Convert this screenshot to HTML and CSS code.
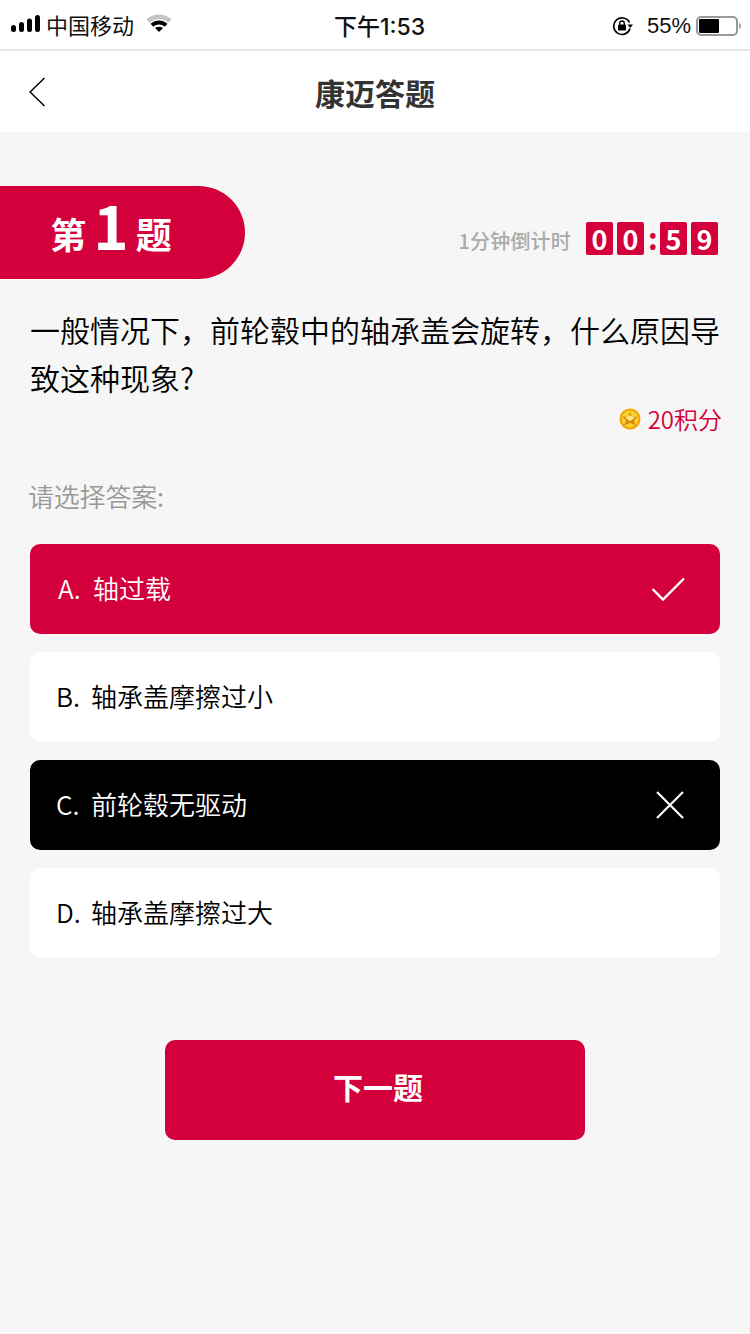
FILE: index.html
```html
<!DOCTYPE html>
<html lang="zh-CN">
<head>
<meta charset="utf-8">
<title>康迈答题</title>
<link rel="stylesheet" href="styles.css">
</head>
<body>
<div class="statusbar">
  <div class="st-left">
    <svg class="signal" width="30" height="18" viewBox="0 0 30 18"><rect x="0" y="10" width="5" height="7" rx="2.5"/><rect x="8" y="7" width="5" height="10" rx="2.5"/><rect x="16" y="3.500" width="5" height="13.500" rx="2.500"/><rect x="24" y="0" width="5" height="17" rx="2.500"/></svg>
    <span class="carrier">中国移动</span>
    <svg class="wifi" width="26" height="19" viewBox="0 0 26 19"><path d="M0.500 5.500C7.500-1.300 18.500-1.300 25.500 5.500L22.300 8.800C16.500 3.800 9.500 3.800 3.700 8.800Z" fill="#c4c4c4"/><path d="M4.500 9.800C9.500 5.300 16.500 5.300 21.500 9.800L18.600 12.700C15.200 9.800 10.800 9.800 7.400 12.700Z"/><path d="M9 14C11.300 12.300 14.700 12.300 17 14L13 18Z"/></svg>
  </div>
  <div class="st-time">下午1:53</div>
  <div class="st-right">
    <svg class="lock" width="22" height="20" viewBox="0 0 22 20"><path d="M17.500 6.500A8.300 8.300 0 1 0 18 12.500" fill="none" stroke="#000" stroke-width="1.700"/><path d="M15.500 8.500H21L18.300 12Z"/><rect x="6" y="8.500" width="8" height="6" rx="1"/><path d="M7.700 9V7.300a2.300 2.300 0 0 1 4.600 0V9" fill="none" stroke="#000" stroke-width="1.400"/></svg>
    <span class="pct">55%</span>
    <span class="battery"><span class="battery-fill"></span></span>
    <span class="battery-tip"></span>
  </div>
</div>
<header class="nav">
  <svg class="back" width="16" height="30" viewBox="0 0 16 30"><path d="M15.500 1L1 15L15.500 29" fill="none" stroke="#000" stroke-width="1.500"/></svg>
  <h1 class="nav-title">康迈答题</h1>
</header>
<main class="content">
  <div class="qhead">
    <div class="qbadge"><span class="qb-word">第</span><span class="qb-num">1</span><span class="qb-word">题</span></div>
    <div class="timer">
      <span class="timer-label">1分钟倒计时</span>
      <span class="digits">
        <span class="digit">0</span><span class="digit">0</span><span class="colon">:</span><span class="digit">5</span><span class="digit">9</span>
      </span>
    </div>
  </div>
  <p class="question">一般情况下，前轮毂中的轴承盖会旋转，什么原因导致这种现象?</p>
  <div class="points">
    <svg class="coin" width="22" height="22" viewBox="0 0 22 22"><circle cx="11" cy="11" r="10.500" fill="#efa400"/><circle cx="11" cy="11" r="8.500" fill="#fbd234"/><path d="M3 8.500L8.500 9L11 4L13.500 9L19 8.500L15 12.500L17 17.500L11 15L5 17.500L7 12.500Z" fill="#d98a12"/><path d="M6.500 10L11 7L15.500 10L11 13Z" fill="#fde98a"/></svg>
    <span>20积分</span>
  </div>
  <div class="prompt">请选择答案:</div>
  <div class="options">
    <div class="option is-correct"><span class="opt-key">A.</span><span class="opt-text">轴过载</span>
      <svg class="opt-icon" width="36" height="28" viewBox="0 0 36 28"><path d="M2.500 14L13 24.500L34 3.500" fill="none" stroke="#fff" stroke-width="2.400"/></svg></div>
    <div class="option"><span class="opt-key">B.</span><span class="opt-text">轴承盖摩擦过小</span></div>
    <div class="option is-wrong"><span class="opt-key">C.</span><span class="opt-text">前轮毂无驱动</span>
      <svg class="opt-icon" width="36" height="28" viewBox="0 0 36 28"><path d="M7 1L33 27M33 1L7 27" fill="none" stroke="#fff" stroke-width="2.200"/></svg></div>
    <div class="option"><span class="opt-key">D.</span><span class="opt-text">轴承盖摩擦过大</span></div>
  </div>
  <button class="next" type="button">下一题</button>
</main>
</body>
</html>
```
FILE: styles.css
```css
* { box-sizing: border-box; }
html, body { margin: 0; padding: 0; }
body {
  width: 750px;
  height: 1334px;
  overflow: hidden;
  background: #f6f6f6;
  color: #000;
  font-family: "Noto Sans CJK SC", "Noto Sans", sans-serif;
}
.statusbar {
  height: 51px;
  background: #fff;
  border-bottom: 2px solid #e6e6e6;
  display: flex;
  align-items: center;
  justify-content: space-between;
  padding: 0 9px 0 11px;
  position: relative;
  font-family: "Liberation Sans", "Noto Sans CJK SC", sans-serif;
  font-size: 22px;
  color: #111;
}
.st-left, .st-right { display: flex; align-items: center; }
.signal { margin-right: 5px; margin-top: -1px; }
.wifi { margin-left: 12px; margin-top: -2px; }
.carrier { line-height: 26px; margin-top: -2px; font-family: "Noto Sans CJK SC", sans-serif; font-weight: 400; }
.st-time {
  position: absolute;
  left: 0;
  right: 0;
  padding-left: 9px;
  text-align: center;
  font-weight: 500;
  font-size: 23px;
  font-family: "Inter", "Noto Sans CJK SC", sans-serif;
}
.lock { margin-right: 13px; margin-top: 2px; }
.pct { margin-right: 5px; margin-top: 2px; }
.battery {
  width: 42px;
  height: 20px;
  margin-top: 3px;
  border: 2px solid #999;
  border-radius: 5px;
  padding: 1px;
  display: block;
}
.battery-fill { display: block; width: 20px; height: 100%; background: #000; border-radius: 1px; }
.battery-tip { width: 2px; height: 6px; background: #aaa; margin-left: 1px; margin-top: 3px; border-radius: 0 2px 2px 0; }
.nav {
  height: 81px;
  background: #fff;
  display: flex;
  align-items: center;
  justify-content: center;
  position: relative;
}
.back { position: absolute; left: 29px; top: 26px; }
.nav-title { margin: 0; font-size: 30px; font-weight: 700; color: #333; line-height: 40px; }
.content { padding-top: 54px; }
.qhead { display: flex; align-items: center; justify-content: space-between; padding-right: 32px; }
.qbadge {
  width: 245px;
  height: 93px;
  background: #d3003b;
  border-radius: 0 47px 47px 0;
  color: #fff;
  display: flex;
  align-items: center;
  justify-content: center;
  gap: 7px;
  font-weight: 700;
  padding-right: 23px;
}
.qb-word { font-size: 36px; line-height: 50px; }
.qb-num { font-size: 60px; line-height: 70px; margin-top: -18px; }
.timer { display: flex; align-items: center; gap: 15px; margin-top: 11px; }
.timer-label { font-size: 20px; font-weight: 500; color: #aaa; line-height: 28px; margin-top: 6px; letter-spacing: 0.2px; }
.digits { display: flex; align-items: center; gap: 4px; }
.digit {
  width: 27px;
  height: 33px;
  background: #d3003b;
  color: #fff;
  border-radius: 2px;
  font-size: 27px;
  font-weight: 700;
  line-height: 33px;
  text-align: center;
}
.colon { width: 8px; text-align: center; font-size: 30px; font-weight: 700; color: #d3003b; line-height: 28px; margin-top: -3px; }
.question {
  margin: 26px 30px 0;
  font-size: 30px;
  font-weight: 350;
  line-height: 48px;
  color: #000;
}
.points {
  display: flex;
  align-items: center;
  justify-content: flex-end;
  gap: 7px;
  padding-right: 28px;
  margin-top: -3px;
  color: #d3003b;
  font-size: 24px;
  font-weight: 350;
  line-height: 42px;
}
.prompt { margin: 38px 28px 0; font-size: 26px; font-weight: 350; letter-spacing: -0.2px; line-height: 36px; color: #999; }
.options { margin: 30px 30px 0; display: flex; flex-direction: column; gap: 18px; }
.option {
  height: 90px;
  background: #fff;
  border-radius: 10px;
  display: flex;
  align-items: center;
  padding: 0 34px 4px 26px;
  font-size: 26px;
  font-weight: 350;
  color: #000;
}
.opt-key { width: 35px; }
.opt-text { flex: 1; }
.opt-icon { margin-top: 4px; }
.is-correct { background: #d3003b; color: #fff; padding-left: 28px; }
.is-wrong { background: #000; color: #fff; }
.next {
  display: block;
  width: 420px;
  height: 100px;
  margin: 82px 0 0 165px;
  border: 0;
  border-radius: 10px;
  background: #d3003b;
  color: #fff;
  font-family: inherit;
  font-size: 30px;
  font-weight: 700;
  padding: 0 0 8px 6px;
}
```
